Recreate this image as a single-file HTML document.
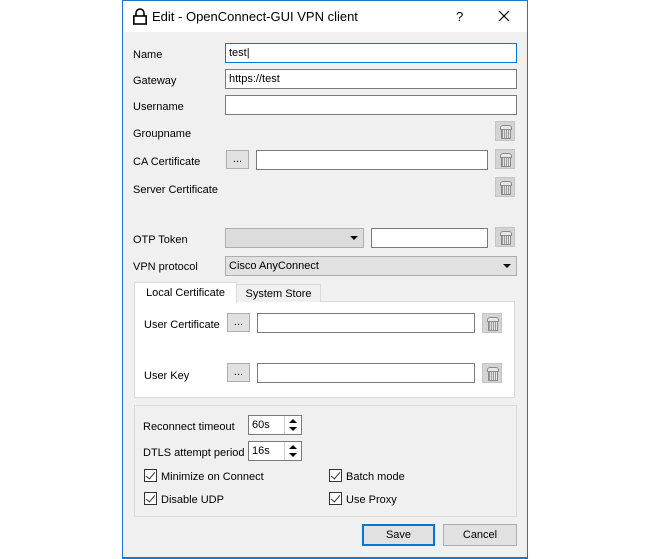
<!DOCTYPE html>
<html><head><meta charset="utf-8"><style>
*{margin:0;padding:0;box-sizing:border-box}
body{width:650px;height:559px;background:#fff;position:relative;font-family:"Liberation Sans",Tahoma,sans-serif;font-size:11px;color:#000;overflow:hidden}
.a{position:absolute}
#win{left:122px;top:0;width:406px;height:559px;border:1px solid #1979ca;border-bottom:2px solid #1979ca;background:#f0f0f0}
#title{left:123px;top:1px;width:404px;height:31px;background:#fff}
.lbl{position:absolute;left:133px;line-height:14px;top:1px}
.in{position:absolute;background:#fff;border:1px solid #7a7a7a;height:20px;padding-left:3px;line-height:19px}
.btn{position:absolute;background:#e1e1e1;border:1px solid #adadad;text-align:center;line-height:17px}
.tr{position:absolute;width:20px;height:20px;background:#d4d4d4;border:1px solid #c4c4c4}
.tr:before{content:"";position:absolute;left:5px;top:6px;width:8px;height:10px;border:1px solid #8a8a8a;border-top:none;background:repeating-linear-gradient(90deg,#999 0 1px,#e4e4e4 1px 2px)}
.tr:after{content:"";position:absolute;left:4px;top:3px;width:10px;height:3px;border:1px solid #8a8a8a;border-radius:3px 3px 0 0;background:#e8e8e8}
.cb{position:absolute;width:13px;height:13px;border:1px solid #333;background:#fff}
.cb:after{content:"";position:absolute;left:3px;top:0px;width:4px;height:8px;border-right:1.5px solid #333;border-bottom:1.5px solid #333;transform:rotate(40deg)}
.arr{position:absolute;width:0;height:0;border-left:4px solid transparent;border-right:4px solid transparent;border-top:4px solid #000}
.spin{position:absolute;width:17px;height:18px;border-left:1px solid #ccc}
</style></head><body>
<div id="win" class="a"></div>
<div id="title" class="a"></div>
<svg class="a" style="left:132px;top:8px" width="16" height="17" viewBox="0 0 16 17"><path d="M4 8V5a4 4 0 0 1 8 0v3" fill="none" stroke="#000" stroke-width="1.6"/><rect x="1.8" y="8" width="12.4" height="8" fill="none" stroke="#000" stroke-width="1.6"/></svg>
<div class="a" style="left:152px;top:9px;font-size:13px">Edit - OpenConnect-GUI VPN client</div>
<div class="a" style="left:456px;top:9px;font-size:13px">?</div>
<svg class="a" style="left:498px;top:10px" width="12" height="12"><path d="M1 1L11 11M11 1L1 11" stroke="#000" stroke-width="1.2"/></svg>

<div class="lbl" style="top:48px">Name</div>
<div class="in" style="left:225px;top:43px;width:292px;border-color:#0078d7">test|</div>
<div class="lbl" style="top:74px">Gateway</div>
<div class="in" style="left:225px;top:69px;width:292px">https://test</div>
<div class="lbl" style="top:100px">Username</div>
<div class="in" style="left:225px;top:95px;width:292px"></div>
<div class="lbl" style="top:127px">Groupname</div>
<div class="tr" style="left:495px;top:121px"></div>
<div class="lbl" style="top:155px">CA Certificate</div>
<div class="btn" style="left:226px;top:150px;width:23px;height:19px">...</div>
<div class="in" style="left:256px;top:150px;width:232px"></div>
<div class="tr" style="left:495px;top:149px"></div>
<div class="lbl" style="top:183px">Server Certificate</div>
<div class="tr" style="left:495px;top:177px"></div>

<div class="lbl" style="top:233px">OTP Token</div>
<div class="btn" style="left:225px;top:228px;width:139px;height:20px;background:#dcdcdc"></div>
<div class="arr" style="left:350px;top:236px"></div>
<div class="in" style="left:371px;top:228px;width:117px"></div>
<div class="tr" style="left:495px;top:227px"></div>
<div class="lbl" style="top:260px">VPN protocol</div>
<div class="btn" style="left:225px;top:256px;width:292px;height:20px;text-align:left;padding-left:3px;line-height:19px">Cisco AnyConnect</div>
<div class="arr" style="left:503px;top:264px"></div>

<div class="a" style="left:134px;top:301px;width:381px;height:97px;background:#fff;border:1px solid #d9d9d9"></div>
<div class="a" style="left:236px;top:284px;width:85px;height:18px;background:#f0f0f0;border:1px solid #d9d9d9;border-bottom:none;text-align:center;line-height:18px">System Store</div>
<div class="a" style="left:134px;top:282px;width:103px;height:21px;background:#fff;border:1px solid #d9d9d9;border-bottom:none;text-align:center;line-height:20px">Local Certificate</div>
<div class="lbl" style="left:144px;top:318px">User Certificate</div>
<div class="btn" style="left:227px;top:313px;width:23px;height:19px">...</div>
<div class="in" style="left:257px;top:313px;width:218px"></div>
<div class="tr" style="left:482px;top:313px"></div>
<div class="lbl" style="left:144px;top:369px">User Key</div>
<div class="btn" style="left:227px;top:363px;width:23px;height:19px">...</div>
<div class="in" style="left:257px;top:363px;width:218px"></div>
<div class="tr" style="left:482px;top:363px"></div>

<div class="a" style="left:134px;top:405px;width:383px;height:112px;border:1px solid #dcdcdc"></div>
<div class="lbl" style="left:143px;top:420px">Reconnect timeout</div>
<div class="in" style="left:248px;top:415px;width:54px">60s</div>
<div class="spin" style="left:284px;top:416px"><div class="arr" style="left:4px;top:3px;border-top:none;border-bottom:4px solid #000"></div><div class="arr" style="left:4px;top:11px"></div></div>
<div class="lbl" style="left:143px;top:446px">DTLS attempt period</div>
<div class="in" style="left:248px;top:441px;width:54px">16s</div>
<div class="spin" style="left:284px;top:442px"><div class="arr" style="left:4px;top:3px;border-top:none;border-bottom:4px solid #000"></div><div class="arr" style="left:4px;top:11px"></div></div>
<div class="cb" style="left:144px;top:469px"></div><div class="lbl" style="left:161px;top:470px">Minimize on Connect</div>
<div class="cb" style="left:329px;top:469px"></div><div class="lbl" style="left:346px;top:470px">Batch mode</div>
<div class="cb" style="left:144px;top:492px"></div><div class="lbl" style="left:161px;top:493px">Disable UDP</div>
<div class="cb" style="left:329px;top:492px"></div><div class="lbl" style="left:346px;top:493px">Use Proxy</div>

<div class="btn" style="left:362px;top:524px;width:73px;height:22px;border:2px solid #0078d7;line-height:19px">Save</div>
<div class="btn" style="left:443px;top:524px;width:74px;height:22px;line-height:21px">Cancel</div>
</body></html>
